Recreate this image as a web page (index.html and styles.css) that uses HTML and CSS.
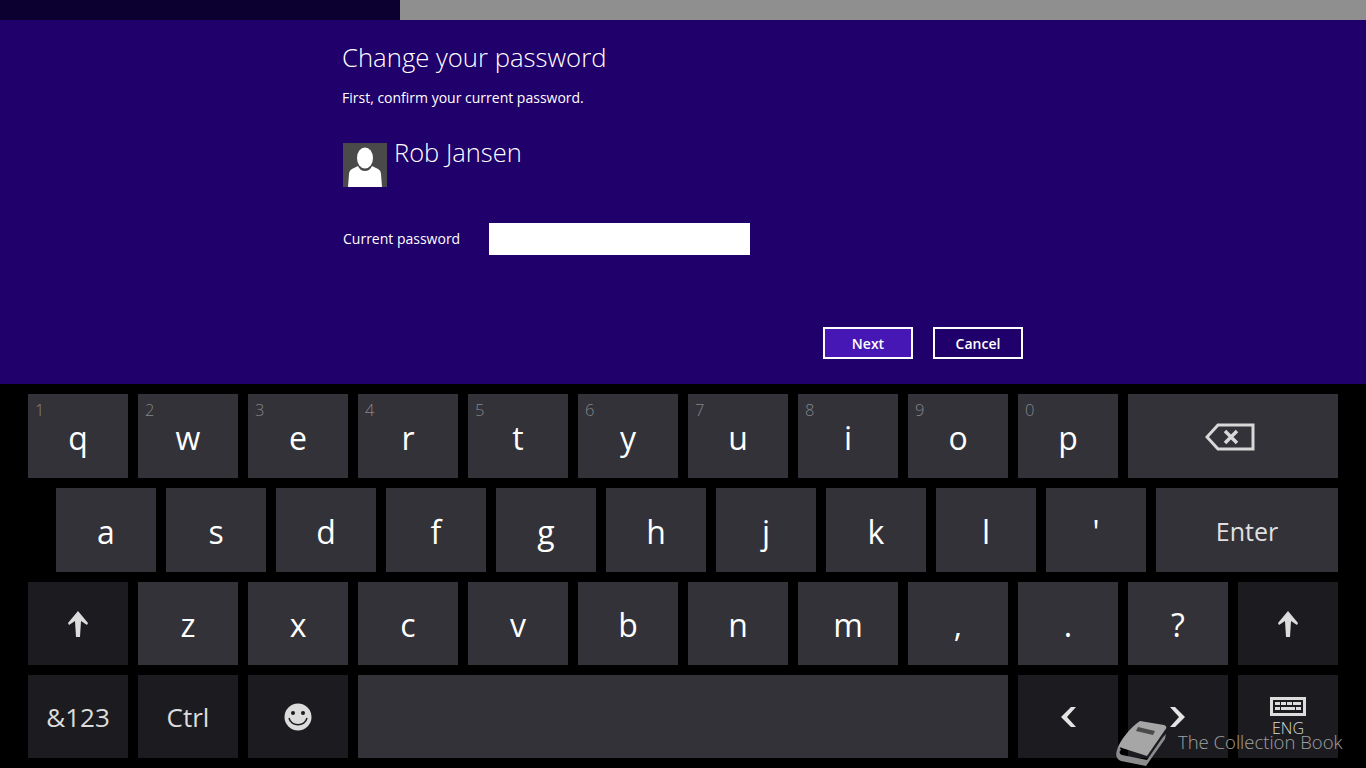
FILE: index.html
```html
<!DOCTYPE html>
<html lang="en">
<head>
    <meta charset="UTF-8">
    <title>Change your password</title>
    <link rel="stylesheet" href="styles.css">
</head>
<body>
    <div class="topbar">
        <div class="topbar-dark"></div>
        <div class="topbar-gray"></div>
    </div>
    <main class="panel">
        <div class="form">
            <h1>Change your password</h1>
            <p class="intro">First, confirm your current password.</p>
            <div class="user">
                <svg class="avatar" width="44" height="44" viewBox="0 0 44 44">
                    <rect width="44" height="44" fill="#4a4a4a"/>
                    <path fill="#fff" d="M5 44l1-13c0-3 2-5 5-6l4-2c1 3 4 5 7 5s6-2 7-5l4 2c3 1 5 3 5 6l1 13z"/>
                    <ellipse cx="22" cy="15" fill="#fff" rx="8" ry="10.500"/>
                </svg>
                <span class="user-name">Rob Jansen</span>
            </div>
            <div class="field">
                <label for="pw">Current password</label>
                <input id="pw" type="password">
            </div>
            <div class="buttons">
                <button class="primary">Next</button>
                <button>Cancel</button>
            </div>
        </div>
    </main>
    <section class="keyboard">
        <div class="row">
            <div class="key"><span class="num">1</span>q</div>
            <div class="key"><span class="num">2</span>w</div>
            <div class="key"><span class="num">3</span>e</div>
            <div class="key"><span class="num">4</span>r</div>
            <div class="key"><span class="num">5</span>t</div>
            <div class="key"><span class="num">6</span>y</div>
            <div class="key"><span class="num">7</span>u</div>
            <div class="key"><span class="num">8</span>i</div>
            <div class="key"><span class="num">9</span>o</div>
            <div class="key"><span class="num">0</span>p</div>
            <div class="key wide">
                <svg width="50" height="28" viewBox="0 0 50 28" fill="none" stroke="#d8d8d8" stroke-width="3">
                    <path d="M48 2H13L2 14l11 12h35z"/>
                    <path stroke-width="3.500" d="M20 8l12 12M32 8L20 20"/>
                </svg>
            </div>
        </div>
        <div class="row row-two">
            <div class="key">a</div>
            <div class="key">s</div>
            <div class="key">d</div>
            <div class="key">f</div>
            <div class="key">g</div>
            <div class="key">h</div>
            <div class="key">j</div>
            <div class="key">k</div>
            <div class="key">l</div>
            <div class="key">'</div>
            <div class="key enter">Enter</div>
        </div>
        <div class="row short">
            <div class="key dark">
                <svg width="24" height="28" viewBox="0 0 24 28"><path fill="#dcdcdc" d="M12 1l10 12-1 2-6-4 -1 16h-4L9 11l-6 4-1-2z"/></svg>
            </div>
            <div class="key">z</div>
            <div class="key">x</div>
            <div class="key">c</div>
            <div class="key">v</div>
            <div class="key">b</div>
            <div class="key">n</div>
            <div class="key">m</div>
            <div class="key">,</div>
            <div class="key">.</div>
            <div class="key">?</div>
            <div class="key dark">
                <svg width="24" height="28" viewBox="0 0 24 28"><path fill="#dcdcdc" d="M12 1l10 12-1 2-6-4 -1 16h-4L9 11l-6 4-1-2z"/></svg>
            </div>
        </div>
        <div class="row short">
            <div class="key dark">&amp;123</div>
            <div class="key dark">Ctrl</div>
            <div class="key dark">
                <svg width="28" height="28" viewBox="0 0 28 28">
                    <circle cx="14" cy="14" r="13.500" fill="#dcdcdc"/>
                    <circle cx="9" cy="10" r="2" fill="#1c1c20"/>
                    <circle cx="19" cy="10" r="2" fill="#1c1c20"/>
                    <path fill="none" stroke="#1c1c20" stroke-width="1.500" d="M5 15c2 9 16 9 18 0"/>
                </svg>
            </div>
            <div class="key space"></div>
            <div class="key dark">
                <svg width="18" height="22" viewBox="0 0 18 22"><path fill="#e4e4e4" d="M12 1h5L8 11l9 10h-5L2 11z"/></svg>
            </div>
            <div class="key dark">
                <svg width="18" height="22" viewBox="0 0 18 22"><path fill="#e4e4e4" d="M6 1H1l9 10-9 10h5l10-10z"/></svg>
            </div>
            <div class="key dark lang">
                <svg width="36" height="19" viewBox="0 0 36 19">
                    <rect x="1.500" y="1.500" width="33" height="16" fill="none" stroke="#dcdcdc" stroke-width="3"/>
                    <path fill="#dcdcdc" d="M5 5h5v3H5zM11 5h5v3h-5zM17 5h5v3h-5zM23 5h8v3h-8zM5 10h5v3H5zM11 10h14v3H11zM26 10h5v3h-5z"/>
                </svg>
                <span>ENG</span>
            </div>
        </div>
    </section>
    <div class="watermark">
        <svg width="52" height="48" viewBox="0 0 52 48">
            <path fill="#a6a6a6" d="M24 2l24 4c3 1 3 3 1 5L31 37 6 29c-2-1-4 0-5 2C4 21 14 9 24 2z"/>
            <path fill="#8c8c8c" d="M1 31c-2 6 0 10 4 11l25 5 19-27 1-5-3 3-16 23-25-5c-3-1-3-4-1-5l-1-2c-1-1-2 0-3 2z"/>
            <path fill="#4a4a4a" d="M22 8l17 4-2 4-17-4z"/>
        </svg>
        <span>The Collection Book</span>
    </div>
</body>
</html>
```

FILE: styles.css
```css
*{
    margin: 0;
    padding: 0;
    box-sizing: border-box;
    font-family: "Open Sans", "Noto Sans", Arial, sans-serif;
}

html, body{
    height: 100%;
}

body{
    background-color: #000;
    color: #fff;
    overflow: hidden;
}

.topbar{
    display: flex;
    height: 20px;
}
.topbar-dark{
    width: 400px;
    background-color: #0c0030;
}
.topbar-gray{
    flex: 1;
    background-color: #8f8f8f;
}

.panel{
    height: 364px;
    background-color: #20006a;
    padding: 20px 0 0 342px;
}

.form{
    width: 681px;
}

h1{
    font-size: 25.700px;
    font-weight: 300;
    line-height: 36px;
}

.intro{
    font-size: 14px;
    line-height: 20px;
    margin-top: 12px;
}

.user{
    display: flex;
    margin: 35px 0 0 1px;
}
.avatar{
    display: block;
}
.user-name{
    font-size: 25.500px;
    font-weight: 300;
    line-height: 28px;
    margin: -5px 0 0 7px;
}

.field{
    display: flex;
    align-items: center;
    margin: 36px 0 0 1px;
}
.field label{
    font-size: 14px;
    width: 146px;
    margin-top: -2px;
}
.field input{
    width: 261px;
    height: 32px;
    border: 0;
    outline: 0;
    background-color: #fff;
}

.buttons{
    display: flex;
    justify-content: flex-end;
    gap: 20px;
    margin-top: 72px;
}
.buttons button{
    width: 90px;
    height: 32px;
    border: 2px solid #fff;
    background-color: transparent;
    color: #fff;
    font-size: 14px;
    font-weight: 600;
}
.buttons .primary{
    background-color: #4617b4;
}

.keyboard{
    display: flex;
    flex-direction: column;
    gap: 10px;
    padding: 10px 28px 0;
}

.row{
    display: flex;
    gap: 10px;
    height: 84px;
}
.row.short{
    height: 83px;
}
.row-two{
    padding-left: 28px;
}

.key{
    position: relative;
    display: flex;
    align-items: center;
    justify-content: center;
    width: 100px;
    background-color: #323238;
    font-size: 32px;
    padding-top: 2px;
}
.key svg{
    display: block;
}
.key.wide{
    width: 210px;
    padding: 2px 6px 0 0;
}
.key.enter{
    flex: 1;
    font-size: 25px;
    color: #e0e0e0;
}
.key.space{
    width: 650px;
}
.key.dark{
    background-color: #1c1c20;
    font-size: 26px;
    color: #dcdcdc;
    padding-top: 0;
}

.num{
    position: absolute;
    top: 4px;
    left: 7px;
    font-size: 16.500px;
    font-weight: 300;
    color: #85858a;
}

.key.lang{
    flex-direction: column;
    justify-content: flex-start;
    padding-top: 22px;
    font-size: 16px;
    font-weight: 300;
    line-height: 18px;
}
.key.lang span{
    margin-top: 3px;
}

.watermark{
    position: absolute;
    left: 1116px;
    top: 719px;
    display: flex;
    align-items: center;
    color: #a0a0a0;
    font-size: 18.500px;
    font-weight: 300;
}
.watermark span{
    margin: -3px 0 0 10px;
}
```
